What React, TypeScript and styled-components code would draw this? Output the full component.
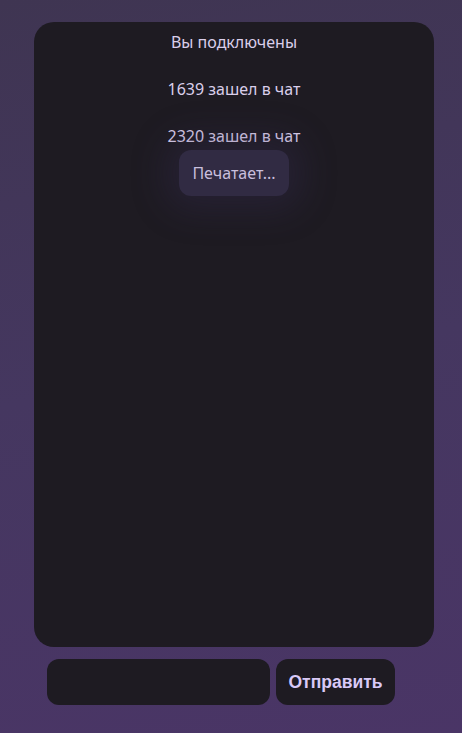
import styled, { createGlobalStyle } from "styled-components"

const GlobalStyle = createGlobalStyle`
    html, body {
        margin: 0;
        height: 100%;
    }

    body {
        background: linear-gradient(170deg, #3f3552 0%, #453760 50%, #4a3566 100%);
        font-family: "Noto Sans", "Open Sans", sans-serif;
        overflow: hidden;
    }
`

const messages = ['Вы подключены', '1639 зашел в чат', '2320 зашел в чат']

export default function App() {
    return (
        <>
            <GlobalStyle />
            <StyledPage>
                <ChatWindow>
                    {messages.map(msg => <Message key={msg}>{msg}</Message>)}
                    <TypingBubble>Печатает...</TypingBubble>
                </ChatWindow>
                <SendForm onSubmit={ev => ev.preventDefault()}>
                    <MessageInput type="text" />
                    <SendButton type="submit">Отправить</SendButton>
                </SendForm>
            </StyledPage>
        </>
    )
}


const StyledPage = styled.main`
    width: 400px;
    padding-top: 22px;
    margin-left: 34px;
    display: flex;
    flex-direction: column;
`

const ChatWindow = styled.section`
    height: 625px;
    box-sizing: border-box;
    background-color: #1e1b22;
    border-radius: 20px;
    padding-top: 8px;
    display: flex;
    flex-direction: column;
    align-items: center;
    gap: 23px;
`

const Message = styled.div`
    color: #dacfeb;
    font-size: 16px;
    line-height: 24px;
    text-align: center;
`

const TypingBubble = styled.div`
    margin-top: -21px;
    padding: 0 13px;
    height: 46px;
    display: flex;
    align-items: center;
    background-color: #312b43;
    border-radius: 12px;
    color: #c9bfdd;
    font-size: 16px;
    box-shadow: 0 0 34px 14px rgba(55, 46, 88, 0.3);
`

const SendForm = styled.form`
    display: flex;
    gap: 6px;
    margin: 12px 0 0 13px;
`

const MessageInput = styled.input`
    width: 223px;
    height: 46px;
    box-sizing: border-box;
    border: none;
    outline: none;
    border-radius: 12px;
    background-color: #1e1b22;
    color: #dacfeb;
    padding: 0 12px;
    font-size: 16px;
`

const SendButton = styled.button`
    width: 119px;
    height: 46px;
    border: none;
    border-radius: 12px;
    background-color: #1e1b22;
    color: #d9c9f7;
    font-family: "Liberation Sans", Arial, sans-serif;
    font-weight: bold;
    font-size: 17.5px;
    cursor: pointer;
`
